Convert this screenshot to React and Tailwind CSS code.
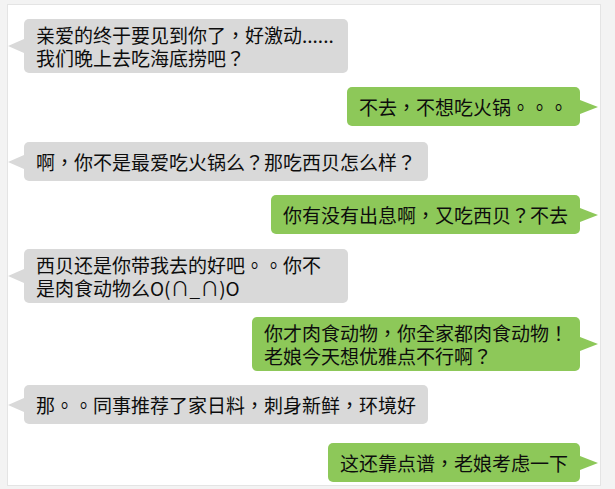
import React from 'react';

const messages = [
  { side: 'left', lines: ['亲爱的终于要见到你了，好激动......', '我们晚上去吃海底捞吧？'], mt: 'mt-0', wide: true },
  { side: 'right', lines: ['不去，不想吃火锅。。。'], mt: 'mt-[14px]' },
  { side: 'left', lines: ['啊，你不是最爱吃火锅么？那吃西贝怎么样？'], mt: 'mt-[16px]' },
  { side: 'right', lines: ['你有没有出息啊，又吃西贝？不去'], mt: 'mt-[14px]' },
  { side: 'left', lines: ['西贝还是你带我去的好吧。。你不', '是肉食动物么O(∩_∩)O'], mt: 'mt-[15px]', wide: true },
  { side: 'right', lines: ['你才肉食动物，你全家都肉食动物！', '老娘今天想优雅点不行啊？'], mt: 'mt-[14px]' },
  { side: 'left', lines: ['那。。同事推荐了家日料，刺身新鲜，环境好'], mt: 'mt-[14px]' },
  { side: 'right', lines: ['这还靠点谱，老娘考虑一下'], mt: 'mt-[19px]' },
];

const Bubble = ({ side, lines, wide }) => {
  const isLeft = side === 'left';
  const multi = lines.length > 1;
  return (
    <div
      className={`relative rounded-[5px] px-3 text-[19px] text-[#0d0d0d] whitespace-nowrap ${
        multi ? 'py-[4px] leading-[23px]' : 'h-[39px] flex items-center leading-[22px]'
      } ${isLeft ? 'bg-[#d9d9d9]' : 'bg-[#8dc859]'} ${wide ? 'w-[324px]' : ''}`}
    >
      {isLeft ? (
        <span className="absolute top-1/2 -translate-y-1/2 right-full w-0 h-0 border-y-[7px] border-y-transparent border-r-[16px] border-r-[#d9d9d9]" />
      ) : (
        <span className="absolute top-1/2 -translate-y-1/2 left-full w-0 h-0 border-y-[7px] border-y-transparent border-l-[18px] border-l-[#8dc859]" />
      )}
      <div>
        {lines.map((l, i) => (
          <div key={i}>{l}</div>
        ))}
      </div>
    </div>
  );
};

export default function App() {
  return (
    <div
      className="w-[615px] h-[489px] bg-[#f3f3f3] pt-[4px] pl-[7px] overflow-hidden"
      style={{ fontFamily: '"Noto Sans CJK TC", "Noto Sans CJK SC", sans-serif' }}
    >
      <div className="w-[594px] h-[482px] bg-white border border-[#e4e4e4] pt-[14px] pl-[16px] pr-[20px] flex flex-col">
        {messages.map((m, i) => (
          <div key={i} className={`flex ${m.side === 'left' ? 'justify-start' : 'justify-end'} ${m.mt}`}>
            <Bubble {...m} />
          </div>
        ))}
      </div>
    </div>
  );
}
